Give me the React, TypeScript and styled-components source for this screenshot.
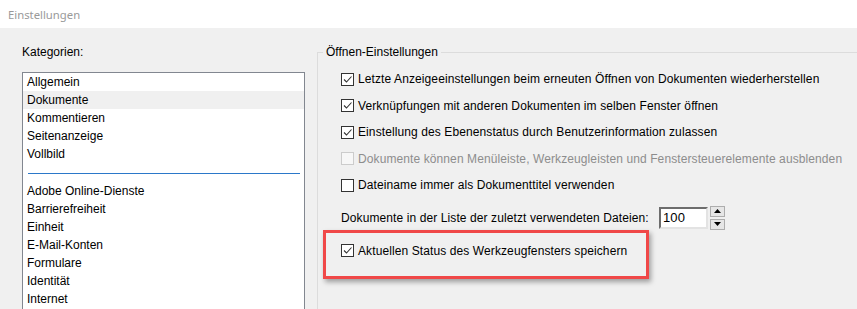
import React from "react";
import styled, { createGlobalStyle } from "styled-components";

const GlobalStyle = createGlobalStyle`
  html, body {
    margin: 0;
    padding: 0;
    background: #f0f0f0;
  }
  body {
    font-family: "Liberation Sans", Arial, sans-serif;
    font-size: 12px;
    color: #000;
    overflow: hidden;
  }
`;

const Window = styled.div`
  width: 857px;
  height: 309px;
  overflow: hidden;
  background: #f0f0f0;
`;

const TitleBar = styled.div`
  height: 28px;
  background: #fff;
  display: flex;
  align-items: center;
  padding-left: 8px;
  font-family: "Noto Sans", "Open Sans", sans-serif;
  font-size: 11.3px;
  color: #9a9a9a;
`;

const Body = styled.div`
  display: flex;
  gap: 12px;
  padding: 17px 0 0 22px;
`;

const LeftColumn = styled.div`
  width: 283px;
  flex-shrink: 0;
  display: flex;
  flex-direction: column;
`;

const Label = styled.div`
  height: 14px;
  line-height: 14px;
  margin-bottom: 13px;
`;

const ListBox = styled.div`
  border: 1px solid #828790;
  background: #fff;
  height: 260px;
  overflow: hidden;
`;

const ListItem = styled.div<{ $selected?: boolean }>`
  height: 18px;
  line-height: 18px;
  padding-left: 4px;
  background: ${(p) => (p.$selected ? "#f0f0f0" : "transparent")};
`;

const Separator = styled.div`
  height: 19px;
  display: flex;
  align-items: center;
  padding: 0 4px 0 5px;
  &::after {
    content: "";
    flex: 1;
    height: 1px;
    background: #2b78c9;
    margin-top: 1px;
  }
`;

const Group = styled.fieldset`
  margin: 0;
  padding: 0;
  width: 600px;
  flex-shrink: 0;
  border: 1px solid #dcdcdc;
  min-width: 0;
`;

const Legend = styled.legend`
  margin-left: 5px;
  padding: 0 3px;
  line-height: 14px;
`;

const GroupContent = styled.div`
  padding: 7px 0 25px 23px;
`;

const Row = styled.div<{ $disabled?: boolean }>`
  height: 26.5px;
  display: flex;
  align-items: center;
  gap: 4px;
  letter-spacing: 0.1px;
  color: ${(p) => (p.$disabled ? "#8d8d8d" : "#000")};
  white-space: nowrap;
`;

const Box = styled.span<{ $disabled?: boolean }>`
  width: 11px;
  height: 11px;
  border: 1px solid ${(p) => (p.$disabled ? "#cccccc" : "#333333")};
  background: ${(p) => (p.$disabled ? "#f7f7f7" : "#fff")};
  display: inline-flex;
  flex-shrink: 0;
`;

const SpinRow = styled.div`
  height: 22px;
  margin-top: 8px;
  display: flex;
  align-items: center;
  white-space: nowrap;
  letter-spacing: 0.1px;
`;

const SpinLabel = styled.span`
  width: 318px;
`;

const SpinInput = styled.div`
  width: 43px;
  height: 18px;
  border-style: solid;
  border-width: 2px;
  border-color: #6d6d6d #e3e3e3 #e3e3e3 #6d6d6d;
  background: #fff;
  line-height: 17px;
  padding-left: 2px;
  font-size: 13px;
`;

const SpinButtons = styled.div`
  display: flex;
  flex-direction: column;
  gap: 2px;
  margin-left: 2px;
`;

const SpinButton = styled.div`
  width: 13px;
  height: 9px;
  border: 1px solid #adadad;
  background: #e6e6e6;
  display: flex;
  align-items: center;
  justify-content: center;
`;

const Highlight = styled.div`
  box-sizing: border-box;
  margin: 1px 0 0 -18px;
  width: 326px;
  height: 49px;
  border: 3px solid #f04848;
  box-shadow: 2px 3px 5px rgba(0, 0, 0, 0.35);
  padding: 0 0 0 15px;
  display: flex;
  align-items: flex-start;
`;

const HighlightRow = styled(Row)`
  margin-top: 9px;
  height: 18px;
`;

const Check = ({ checked, disabled }: { checked?: boolean; disabled?: boolean }) => (
  <Box $disabled={disabled}>
    {checked && (
      <svg width="11" height="11" viewBox="0 0 11 11">
        <path d="M2 5.5 L4.5 8 L9.5 2.5" fill="none" stroke="#333" strokeWidth="1.1" />
      </svg>
    )}
  </Box>
);

const categoriesTop = ["Allgemein", "Dokumente", "Kommentieren", "Seitenanzeige", "Vollbild"];
const categoriesBottom = [
  "Adobe Online-Dienste",
  "Barrierefreiheit",
  "Einheit",
  "E-Mail-Konten",
  "Formulare",
  "Identität",
  "Internet",
];

const options = [
  { text: "Letzte Anzeigeeinstellungen beim erneuten Öffnen von Dokumenten wiederherstellen", checked: true },
  { text: "Verknüpfungen mit anderen Dokumenten im selben Fenster öffnen", checked: true },
  { text: "Einstellung des Ebenenstatus durch Benutzerinformation zulassen", checked: true },
  {
    text: "Dokumente können Menüleiste, Werkzeugleisten und Fenstersteuerelemente ausblenden",
    checked: false,
    disabled: true,
  },
  { text: "Dateiname immer als Dokumenttitel verwenden", checked: false },
];

export default function App() {
  return (
    <Window>
      <GlobalStyle />
      <TitleBar>Einstellungen</TitleBar>
      <Body>
        <LeftColumn>
          <Label>Kategorien:</Label>
          <ListBox>
            {categoriesTop.map((c) => (
              <ListItem key={c} $selected={c === "Dokumente"}>
                {c}
              </ListItem>
            ))}
            <Separator />
            {categoriesBottom.map((c) => (
              <ListItem key={c}>{c}</ListItem>
            ))}
          </ListBox>
        </LeftColumn>
        <Group>
          <Legend>Öffnen-Einstellungen</Legend>
          <GroupContent>
            {options.map((o) => (
              <Row key={o.text} $disabled={o.disabled}>
                <Check checked={o.checked} disabled={o.disabled} />
                {o.text}
              </Row>
            ))}
            <SpinRow>
              <SpinLabel>Dokumente in der Liste der zuletzt verwendeten Dateien:</SpinLabel>
              <SpinInput>100</SpinInput>
              <SpinButtons>
                <SpinButton>
                  <svg width="7" height="4" viewBox="0 0 7 4">
                    <path d="M0 4 L3.5 0 L7 4 Z" fill="#000" />
                  </svg>
                </SpinButton>
                <SpinButton>
                  <svg width="7" height="4" viewBox="0 0 7 4">
                    <path d="M0 0 L3.5 4 L7 0 Z" fill="#000" />
                  </svg>
                </SpinButton>
              </SpinButtons>
            </SpinRow>
            <Highlight>
              <HighlightRow>
                <Check checked />
                Aktuellen Status des Werkzeugfensters speichern
              </HighlightRow>
            </Highlight>
          </GroupContent>
        </Group>
      </Body>
    </Window>
  );
}
